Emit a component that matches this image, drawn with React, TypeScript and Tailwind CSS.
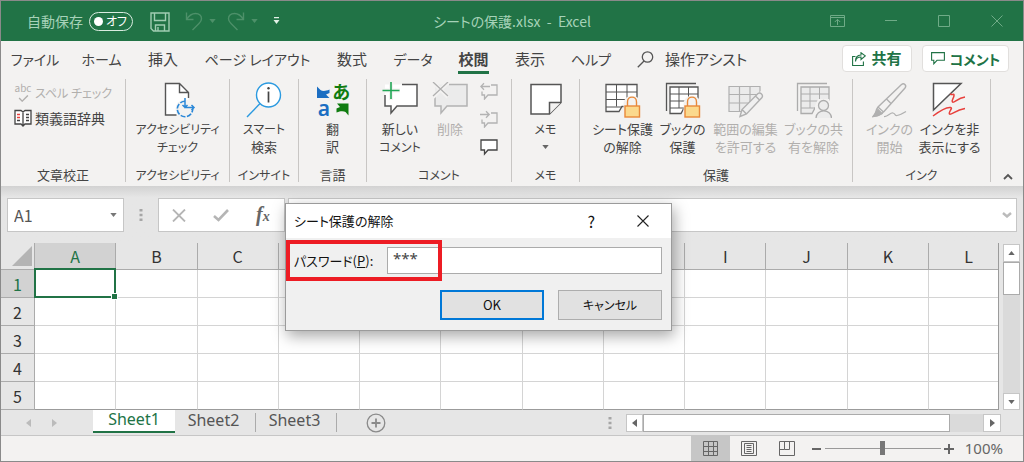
import type { ReactNode } from "react";

const tabs = [
  { label: "ファイル", width: "w-[68px]", size: "text-sm" },
  { label: "ホーム", width: "w-[65px]", size: "text-sm" },
  { label: "挿入", width: "w-[58px]", size: "text-[15px]" },
  { label: "ページ レイアウト", width: "w-[131px]", size: "text-sm" },
  { label: "数式", width: "w-[58px]", size: "text-[15px]" },
  { label: "データ", width: "w-[64px]", size: "text-sm" },
  { label: "校閲", width: "w-[57px]", size: "text-[15px]", active: true },
  { label: "表示", width: "w-[56px]", size: "text-[15px]" },
  { label: "ヘルプ", width: "w-[66px]", size: "text-sm" },
];

const columns = ["A", "B", "C", "D", "E", "F", "G", "H", "I", "J", "K", "L"];
const rows = [1, 2, 3, 4, 5];

function Caret({ className = "" }: { className?: string }) {
  return (
    <svg viewBox="0 0 8 5" className={`h-[4px] w-[7px] ${className}`} fill="currentColor" aria-hidden="true">
      <path d="M0 0h8L4 5z" />
    </svg>
  );
}

function Dots() {
  return (
    <svg viewBox="0 0 4 14" className="h-[14px] w-[4px] shrink-0" fill="#a6a6a6" aria-hidden="true">
      <path d="M.5 1h3v2.500h-3zM.5 5.800h3v2.500h-3zM.5 10.600h3v2.500h-3z" />
    </svg>
  );
}

function TitleBar() {
  return (
    <header className="grid h-[40px] grid-cols-[1fr_auto_1fr] items-center bg-[#217346] text-sm text-[#a6d2b8]">
      <div className="flex items-center pl-[26px]">
        <span>自動保存</span>
        <button
          role="switch"
          aria-checked="false"
          aria-label="自動保存"
          className="ml-[6px] flex h-[19px] w-[44px] items-center justify-between whitespace-nowrap rounded-full border border-[#d9ebe0] pl-[4px] pr-[5px] text-xs leading-none text-white"
        >
          <span className="size-[9px] shrink-0 rounded-full bg-white" />
          オフ
        </button>
        <button aria-label="上書き保存" className="ml-[17px] pt-[2px]">
          <svg viewBox="0 0 20 20" className="size-[20px]" fill="none" stroke="#a0cdb2" strokeWidth="1.400">
            <path d="M1 1h18v18H3.500L1 16.500zM4.500 1v7.500h11V1M5.500 19v-6h9v6M8 15v4" />
          </svg>
        </button>
        <button aria-label="元に戻す" className="ml-[15px] flex items-center gap-[6px] text-[#4d9069]">
          <svg viewBox="0 0 18 20" className="h-[20px] w-[18px]" fill="none" stroke="currentColor" strokeWidth="1.400">
            <path d="M1.500 1.500v7h7M1.500 8.500C4 4.500 7 2.500 10.500 2.500c4 0 6 2.500 6 5.200 0 2-1 3.300-2.500 4.800L7.500 19" />
          </svg>
          <Caret />
        </button>
        <button aria-label="やり直し" className="ml-[11px] flex items-center gap-[6px] text-[#4d9069]">
          <svg viewBox="0 0 18 20" className="h-[20px] w-[18px]" fill="none" stroke="currentColor" strokeWidth="1.400">
            <path d="M16.500 1.500v7h-7M16.500 8.500C14 4.500 11 2.500 7.500 2.500c-4 0-6 2.500-6 5.200 0 2 1 3.300 2.500 4.800l6.500 6.500" />
          </svg>
          <Caret />
        </button>
        <button aria-label="クイック アクセス ツール バーのカスタマイズ" className="ml-[15px] text-[#e3f1e8]">
          <svg viewBox="0 0 7 8" className="h-[8px] w-[7px]" fill="currentColor">
            <path d="M1 0h5v1.200H1zM.5 3h6L3.500 7z" />
          </svg>
        </button>
      </div>
      <h1 className="whitespace-pre">シートの保護.xlsx  -  Excel</h1>
      <div className="flex items-center justify-end pr-[20px] text-[#6fab87]">
        <button aria-label="リボンの表示オプション" className="mr-[40px]">
          <svg viewBox="0 0 15 12" className="h-[12px] w-[15px]" fill="none" stroke="currentColor">
            <path d="M.5.500h14v11H.5zM.5 2.500h14M7.500 10V4.500M4.800 7l2.700-2.700L10.200 7" />
          </svg>
        </button>
        <button aria-label="最小化" className="mr-[41px]">
          <svg viewBox="0 0 12 12" className="size-[12px]" stroke="currentColor"><path d="M0 5.500h12" /></svg>
        </button>
        <button aria-label="最大化" className="mr-[41px]">
          <svg viewBox="0 0 12 12" className="size-[12px]" fill="none" stroke="currentColor"><path d="M.5.500h11v11H.5z" /></svg>
        </button>
        <button aria-label="閉じる">
          <svg viewBox="0 0 12 12" className="size-[12px]" stroke="currentColor"><path d="M.5.500l11 11M11.500.500l-11 11" /></svg>
        </button>
      </div>
    </header>
  );
}

function TabBar() {
  return (
    <nav className="flex h-[38px] items-center text-[15px] text-[#444]">
      {tabs.map((t) => (
        <button key={t.label} className={`${t.width} ${t.size} flex h-full shrink-0 justify-center whitespace-nowrap`}>
          <span
            className={
              t.active
                ? "mt-[5px] h-[28px] border-b-[3px] border-[#217346] font-bold leading-[26px]"
                : "mt-[5px] h-[28px] leading-[26px]"
            }
          >
            {t.label}
          </span>
        </button>
      ))}
      <button className="ml-[13px] flex h-full shrink-0 gap-[11px] whitespace-nowrap pt-[5px] leading-[26px]">
        <svg viewBox="0 0 17 17" className="mt-[5px] size-[17px]" fill="none" stroke="#555" strokeWidth="1.300">
          <circle cx="10.500" cy="6" r="5.200" />
          <path d="M7 10L.8 16.300" />
        </svg>
        操作アシスト
      </button>
      <div className="ml-auto flex gap-[10px] self-start pr-[14px] pt-[4px] font-bold text-[#217346]">
        <button className="flex h-[27px] w-[70px] items-center justify-center gap-[5px] rounded-sm border border-[#e1dfdd] bg-white">
          <svg viewBox="0 0 14 14" className="size-[14px]" fill="none" stroke="currentColor" strokeWidth="1.100">
            <path d="M3.500 4.500H.6v9h10.800V9.500M3.500 9.500c.3-3 2.200-4.500 5.500-4.500V7.500l4.300-3.700L9 .7V3C5 3 3.300 6 3.500 9.500z" />
          </svg>
          共有
        </button>
        <button className="flex h-[27px] w-[87px] items-center justify-center gap-[5px] rounded-sm border border-[#e1dfdd] bg-white text-sm">
          <svg viewBox="0 0 14 13" className="h-[13px] w-[14px]" fill="none" stroke="currentColor" strokeWidth="1.100">
            <path d="M.6.600h12.800v7.700H6l-3.200 3.500V8.300H.6z" />
          </svg>
          コメント
        </button>
      </div>
    </nav>
  );
}

function Group({ label, width, kana, children }: { label: string; width: string; kana?: boolean; children: ReactNode }) {
  return (
    <section aria-label={label} className={`${width} flex h-[103px] shrink-0 flex-col border-r border-[#c8c6c4]`}>
      <div className="flex h-[90px] justify-center pt-[3px]">{children}</div>
      <div className={`text-center leading-[14px] ${kana ? "text-xs leading-[14px]" : ""}`}>{label}</div>
    </section>
  );
}

function BigButton({
  icon,
  lines,
  width,
  disabled,
  menu,
}: {
  icon: ReactNode;
  lines: string[];
  width: string;
  disabled?: boolean;
  menu?: boolean;
}) {
  return (
    <button
      disabled={disabled}
      className={`${width} flex h-[78px] shrink-0 flex-col items-center whitespace-nowrap leading-[18px] ${
        disabled ? "text-[#b1afad]" : "text-[#444]"
      }`}
    >
      <span className="flex h-[38px]">{icon}</span>
      {lines.map((l) => (
        <span key={l} className={/^[ァ-ヶー]+$/.test(l) ? "text-xs leading-[18px]" : ""}>
          {l}
        </span>
      ))}
      {menu && <Caret className="mt-[7px] text-[#666]" />}
    </button>
  );
}

const iconBox = "size-[36px]";

function AccessIcon() {
  return (
    <svg viewBox="0 0 36 36" className={iconBox} fill="none">
      <path d="M5.500 1.500h14l9 9V33h-23z" fill="#fff" />
      <path d="M28.500 16v-5.500l-9-9h-14V33h11M19.500 1.500v9h9" stroke="#555" strokeWidth="1.400" />
      <circle cx="25" cy="27" r="9.500" fill="#f3f2f1" />
      <path d="M25 19.300a7.700 7.700 0 1 0 7.700 7.700" stroke="#2b88d8" strokeWidth="1.600" strokeDasharray="5 1.500" />
      <path d="M25 16v9.500h9M22.500 23l2.500 2.500 2.500-2.500M31.500 23l2.500 2.500-2.500 2.500" stroke="#2b88d8" strokeWidth="1.500" />
    </svg>
  );
}

function SmartIcon() {
  return (
    <svg viewBox="0 0 36 36" className={iconBox} fill="none">
      <circle cx="22.500" cy="13" r="12" fill="#fff" stroke="#2b9ae0" strokeWidth="1.400" />
      <path d="M14 21.500L1 35" stroke="#2b9ae0" strokeWidth="1.400" />
      <path d="M22.500 9.500v11" stroke="#444" strokeWidth="1.700" />
      <circle cx="22.500" cy="6.300" r="1.200" fill="#444" />
    </svg>
  );
}

function TranslateIcon() {
  return (
    <span className="grid h-[36px] w-[34px] grid-cols-2 text-center font-bold leading-[18px]">
      <svg viewBox="0 0 16 18" className="h-[18px] w-[16px]" fill="#1b6ec2">
        <path d="M1 4.500V16h12.500L10 12.500l3.500-1.500V7.500C9 9.500 6 9 4.500 8z" />
      </svg>
      <span className="text-lg leading-[18px] text-[#107c10]">あ</span>
      <span className="font-['Noto_Sans'] text-[21px] font-semibold leading-[16px] text-[#1b6ec2]">a</span>
      <svg viewBox="0 0 16 18" className="h-[18px] w-[16px]" fill="#107c10">
        <path d="M15.500 15.500V3.500H4L7 7l-3.500 1.500v4C8 10.500 11 11 12.500 12z" />
      </svg>
    </span>
  );
}

function NewCommentIcon() {
  return (
    <svg viewBox="0 0 36 36" className={iconBox} fill="none">
      <path d="M3 2.500h32v21.500H15l-6 7v-7H3z" fill="#fff" />
      <path d="M20 2.500h15v21.500H15l-6 7v-7H3V13" stroke="#555" strokeWidth="1.500" />
      <path d="M9 0v18M0 8.500h18" stroke="#f3f2f1" strokeWidth="4" />
      <path d="M9 0v17M.5 8.500h17" stroke="#21a656" strokeWidth="1.600" />
    </svg>
  );
}

function DeleteIcon() {
  return (
    <svg viewBox="0 0 36 36" className={iconBox} fill="none">
      <path d="M3 2.500h32v21.500H15l-6 7v-7H3z" fill="#ebebeb" />
      <path d="M17 2.500h18v21.500H15l-6 7v-7H3V15" stroke="#b3b3b3" strokeWidth="1.500" />
      <path d="M1 0l15 15M16 0L1 15" stroke="#f3f2f1" strokeWidth="4" />
      <path d="M1 0l15 14M16 0L1 14" stroke="#b0b0b0" strokeWidth="1.300" />
    </svg>
  );
}

function SmallComment({ kind }: { kind: "prev" | "next" | "show" }) {
  if (kind === "show")
    return (
      <svg viewBox="0 0 18 18" className="size-[18px]" fill="none">
        <path d="M1 2h16v10H8l-3.500 4v-4H1z" fill="#fff" stroke="#444" strokeWidth="1.300" />
      </svg>
    );
  return (
    <svg viewBox="0 0 18 18" className="size-[18px]" fill="none" stroke="#b3b3b3" strokeWidth="1.300">
      <path d="M11 3h6v10H8l-3.500 4v-4H2V9.500" />
      {kind === "prev" ? <path d="M10 4.500H.8M4 1.300L.8 4.500 4 7.700" /> : <path d="M0 4.500h9.200M6 1.300l3.200 3.200L6 7.700" />}
    </svg>
  );
}

function MemoIcon() {
  return (
    <svg viewBox="0 0 36 36" className={iconBox} fill="none" stroke="#555" strokeWidth="1.500">
      <path d="M3 2.500h30v18L21.500 32H3z" fill="#fff" />
      <path d="M33 20.500H21.500V32" fill="#f3f2f1" />
    </svg>
  );
}

function Lock() {
  return (
    <g>
      <path d="M18.500 36V22c0-11 17-11 17 0v14z" fill="#f3f2f1" />
      <path d="M22.500 24v-4c0-6.500 9-6.500 9 0v4" stroke="#e8893a" strokeWidth="1.400" fill="none" />
      <rect x="20" y="24" width="14.500" height="11" fill="#fbd98d" stroke="#e8893a" strokeWidth="1.400" />
    </g>
  );
}

function SheetLockIcon() {
  return (
    <svg viewBox="0 0 36 36" className={iconBox} fill="none" stroke="#555" strokeWidth="1.300">
      <path d="M1 2.500h31v22H17l-3 5H1z" fill="#fff" />
      <path d="M1 10h31M1 17.500h31M11.500 2.500v22M22 2.500v22M1 25h16" strokeWidth="1" />
      <g stroke="none"><Lock /></g>
    </svg>
  );
}

function BookLockIcon() {
  return (
    <svg viewBox="0 0 36 36" className={iconBox} fill="none" stroke="#555" strokeWidth="1.300">
      <path d="M1.500 29V1.500H31" />
      <path d="M5 5h28v21H19l-3 5.500H5z" fill="#fff" />
      <path d="M5 12h28M5 19h28M14 5v21M23.500 5v21M5 26h14" strokeWidth="1" />
      <g stroke="none"><Lock /></g>
    </svg>
  );
}

function RangeEditIcon() {
  return (
    <svg viewBox="0 0 36 36" className={iconBox} fill="none" stroke="#b0b0b0" strokeWidth="1.200">
      <path d="M1 4.500h31v25H1z" fill="#ebebeb" />
      <path d="M1 12.500h31M1 21h31M11.500 4.500v25M22 4.500v25" />
      <path d="M9 36L36 8v28z" fill="#f3f2f1" stroke="#f3f2f1" strokeWidth="3" />
      <path d="M12 34.500l2-7L30 11.500c2.500-1.500 5.500 1.500 4 4L18.500 32z M14 27.500l4.500 4.500M27.500 14l4.500 4.500" fill="#f0f0f0" strokeWidth="1.400" />
    </svg>
  );
}

function BookShareIcon() {
  return (
    <svg viewBox="0 0 36 36" className={iconBox} fill="none" stroke="#acacac" strokeWidth="1.300">
      <path d="M1.500 29V1.500H31" />
      <path d="M5 5h28v21H19l-3 5.500H5z" fill="#ebebeb" />
      <path d="M5 12h28M5 19h28M14 5v21M23.500 5v21M5 26h14" strokeWidth="1" />
      <path d="M19 36V24l3-7h11l3 7v12z" fill="#f3f2f1" stroke="none" />
      <circle cx="27.500" cy="23.500" r="5" fill="#ececec" />
      <path d="M20 36c0-9.500 15.500-9.500 15.500 0" fill="#ececec" />
    </svg>
  );
}

function PenIcon() {
  return (
    <svg viewBox="0 0 36 36" className={iconBox} fill="none" stroke="#b0b0b0" strokeWidth="1.400">
      <path d="M2 34c2-2 1-5 4-9L29.500 2.500c2.500-2 5.500 1 3.500 3.500L12 29.500c-3 3-7 4.500-10 4.500zM14.500 17l5 5M6 25l5.500 5" />
      <path d="M1 34.500l5-1 4-2-4-4z" fill="#b0b0b0" />
      <path d="M12 34.500c4 .5 6-4 9-3.500s1 3 4 2.500 5-1.500 9-4" strokeWidth="1.200" />
    </svg>
  );
}

function HideInkIcon() {
  return (
    <svg viewBox="0 0 36 36" className={iconBox} fill="none" strokeWidth="1.500">
      <path d="M1.500 1.500h27.500L1.500 28z" fill="#fff" stroke="#555" />
      <path d="M18 12c3 1.500 4-1 4 1.500s-3 5-1.500 6.500 5-4 12.500-5" stroke="#e8403c" />
      <path d="M1 34c6-4.500 14-9 17.500-8.500 3 .5-2.500 4.500-1 6.500 1.500 1.500 6-4 15.500-5.500" stroke="#e8403c" />
    </svg>
  );
}

function Ribbon() {
  return (
    <div className="flex h-[107px] text-[13px] text-[#444]">
      <Group label="文章校正" width="w-[125px]">
        <div className="flex w-full flex-col gap-[4px] pl-[13px]">
          <button disabled className="flex h-[21px] items-center gap-[3px] whitespace-nowrap text-xs text-[#b1afad]">
            <span className="flex w-[18px] flex-col items-center">
              <span className="text-[10px] leading-[8px]">abc</span>
              <svg viewBox="0 0 12 8" className="mt-[3px] h-[7px] w-[11px]" fill="none" stroke="currentColor" strokeWidth="1.600">
                <path d="M1 3.500L4.500 7 11 .5" />
              </svg>
            </span>
            スペル チェック
          </button>
          <button className="flex h-[22px] items-center gap-[3px] whitespace-nowrap text-sm">
            <svg viewBox="0 0 18 18" className="size-[18px]" fill="#fff" stroke="#444" strokeWidth="1.300">
              <path d="M1 1.500h6L9 3l2-1.500h6V15h-6l-2 2-2-2H1zM9 3v14" />
              <path d="M3 11.500h3M12 5.500h3M12 8.500h3M12 11.500h3" />
              <path d="M3 5.500h3M3 8.500h3" stroke="#e8403c" />
            </svg>
            類義語辞典
          </button>
        </div>
      </Group>
      <Group label="アクセシビリティ" kana width="w-[104px]">
        <BigButton width="w-[96px]" icon={<AccessIcon />} lines={["アクセシビリティ", "チェック"]} />
      </Group>
      <Group label="インサイト" kana width="w-[69px]">
        <BigButton width="w-[60px]" icon={<SmartIcon />} lines={["スマート", "検索"]} />
      </Group>
      <Group label="言語" width="w-[68px]">
        <BigButton width="w-[60px]" icon={<TranslateIcon />} lines={["翻", "訳"]} />
      </Group>
      <Group label="コメント" kana width="w-[145px]">
        <BigButton width="w-[56px]" icon={<NewCommentIcon />} lines={["新しい", "コメント"]} />
        <BigButton width="w-[44px]" disabled icon={<DeleteIcon />} lines={["削除"]} />
        <div className="flex w-[34px] flex-col items-center gap-[10px]">
          <button disabled aria-label="前のコメント"><SmallComment kind="prev" /></button>
          <button disabled aria-label="次のコメント"><SmallComment kind="next" /></button>
          <button aria-label="コメントの表示"><SmallComment kind="show" /></button>
        </div>
      </Group>
      <Group label="メモ" kana width="w-[68px]">
        <BigButton width="w-[60px]" icon={<MemoIcon />} lines={["メモ"]} menu />
      </Group>
      <Group label="保護" width="w-[273px]">
        <div className="flex pl-[7px]">
          <BigButton width="w-[62px]" icon={<SheetLockIcon />} lines={["シート保護", "の解除"]} />
          <BigButton width="w-[58px]" icon={<BookLockIcon />} lines={["ブックの", "保護"]} />
          <BigButton width="w-[68px]" disabled icon={<RangeEditIcon />} lines={["範囲の編集", "を許可する"]} />
          <BigButton width="w-[68px]" disabled icon={<BookShareIcon />} lines={["ブックの共", "有を解除"]} />
        </div>
      </Group>
      <Group label="インク" kana width="w-[138px]">
        <BigButton width="w-[56px]" disabled icon={<PenIcon />} lines={["インクの", "開始"]} />
        <BigButton width="w-[64px]" icon={<HideInkIcon />} lines={["インクを非", "表示にする"]} />
      </Group>
      <button aria-label="リボンを折りたたむ" className="ml-auto mr-[10px] self-end pb-[6px]">
        <svg viewBox="0 0 10 7" className="h-[7px] w-[10px]" fill="none" stroke="#555" strokeWidth="1.800">
          <path d="M1 6l4-4 4 4" />
        </svg>
      </button>
    </div>
  );
}

function FormulaBar() {
  return (
    <div className="flex h-[57px] items-start bg-linear-to-b from-[#d2d2d2] to-[#e6e6e6] to-20% pl-[6px] pr-[6px] pt-[12px]">
      <div className="flex h-[34px] w-[117px] shrink-0 items-center border border-[#c6c6c6] bg-white pl-[6px] pr-[6px] text-[#555]">
        <input aria-label="名前ボックス" defaultValue="A1" className="w-full min-w-0 bg-transparent text-base outline-none" />
        <button aria-label="名前の一覧" className="text-[#777]"><Caret /></button>
      </div>
      <div className="flex h-[34px] w-[34px] shrink-0 items-center justify-center"><Dots /></div>
      <div className="flex h-[34px] w-[127px] shrink-0 items-center border border-[#c6c6c6] bg-white pl-[13px]">
        <button disabled aria-label="キャンセル">
          <svg viewBox="0 0 14 13" className="h-[13px] w-[14px]" stroke="#b5b5b5" strokeWidth="1.800"><path d="M1 .5l12 12M13 .5l-12 12" /></svg>
        </button>
        <button disabled aria-label="入力" className="ml-[27px]">
          <svg viewBox="0 0 16 13" className="h-[13px] w-[16px]" fill="none" stroke="#b5b5b5" strokeWidth="2.600"><path d="M1 7l4.500 4L15 1" /></svg>
        </button>
        <button aria-label="関数の挿入" className="ml-[27px] font-['Liberation_Serif'] text-xl font-bold italic leading-none text-[#666]">
          f<span className="text-sm">x</span>
        </button>
      </div>
      <div className="ml-[3px] flex h-[34px] min-w-0 flex-1 items-center border border-[#c6c6c6] bg-white pr-[4px]">
        <input aria-label="数式バー" className="min-w-0 flex-1 bg-transparent outline-none" />
        <button aria-label="数式バーの展開">
          <svg viewBox="0 0 10 6" className="h-[6px] w-[10px]" fill="none" stroke="#bbb" strokeWidth="2.400"><path d="M1 1l4 3.500L9 1" /></svg>
        </button>
      </div>
    </div>
  );
}

function Grid() {
  return (
    <div className="flex bg-[#e6e6e6]">
      <div className="min-w-0 flex-1 border-r border-[#9b9b9b]">
        <table className="w-full table-fixed border-separate border-spacing-0 text-base text-[#333]">
          <colgroup>
            <col className="w-[34px]" />
            {columns.map((c) => (
              <col key={c} className={c === "L" ? "w-[69px]" : ""} />
            ))}
          </colgroup>
          <thead>
            <tr className="h-[27px]">
              <th aria-label="すべて選択" className="border-b border-r border-[#ababab] p-0 pl-[11px] align-middle">
                <svg viewBox="0 0 20 20" className="size-[20px]" fill="#b4b4b4"><path d="M20 0v20H0z" /></svg>
              </th>
              {columns.map((c) => (
                <th
                  key={c}
                  scope="col"
                  className={`border-b border-[#ababab] p-0 text-center font-normal leading-[26px] ${
                    c === "A" ? "border-r bg-[#d2d2d2] text-[#217346]" : c === "L" ? "pl-[10px]" : "border-r"
                  }`}
                >
                  {c}
                </th>
              ))}
            </tr>
          </thead>
          <tbody>
            {rows.map((r) => (
              <tr key={r} className="h-[28px]">
                <th
                  scope="row"
                  className={`border-b border-r border-[#ababab] p-0 text-center font-normal leading-[26px] ${
                    r === 1 ? "bg-[#d2d2d2] text-[#217346]" : ""
                  }`}
                >
                  {r}
                </th>
                {columns.map((c) => (
                  <td
                    key={c}
                    className={`relative border-b bg-white p-0 ${r === 5 ? "border-b-[#9b9b9b]" : "border-b-[#d4d4d4]"} ${
                      c === "L" ? "" : "border-r border-r-[#d4d4d4]"
                    }`}
                  >
                    {r === 1 && c === "A" && (
                      <div className="absolute -inset-x-[1px] -bottom-[1px] -top-[2px] z-10 border-2 border-[#217346]">
                        <span className="absolute -bottom-[3px] -right-[3px] size-[5px] bg-[#217346] outline outline-white" />
                      </div>
                    )}
                  </td>
                ))}
              </tr>
            ))}
          </tbody>
        </table>
      </div>
      <div className="flex w-[24px] shrink-0 flex-col items-center pt-[1px]">
        <div className="flex w-[17px] flex-1 flex-col bg-[#dadada]">
          <button aria-label="上へスクロール" className="flex h-[18px] items-center justify-center border border-[#c6c6c6] bg-white text-[#666]">
            <Caret className="rotate-180" />
          </button>
          <div className="h-[33px] border border-[#ababab] bg-white" />
          <button aria-label="下へスクロール" className="mt-auto flex h-[17px] items-center justify-center border border-[#c6c6c6] bg-white text-[#666]">
            <Caret />
          </button>
        </div>
      </div>
    </div>
  );
}

function Triangle({ dir, className = "" }: { dir: "left" | "right"; className?: string }) {
  return (
    <svg viewBox="0 0 5 8" className={`h-[8px] w-[5px] ${className}`} fill="currentColor" aria-hidden="true">
      {dir === "left" ? <path d="M5 0v8L0 4z" /> : <path d="M0 0v8l5-4z" />}
    </svg>
  );
}

function SheetBar() {
  const other = "my-[3px] h-[19px] w-[81px] border-r border-[#ababab] pb-[5px] pr-[3px] leading-[14px] text-[#555]";
  return (
    <div className="flex h-[26px] border-b border-[#c6c6c6] bg-[#e6e6e6] font-['Noto_Sans'] text-base">
      <div className="flex w-[92px] shrink-0 items-center pl-[25px] text-[#bbb]">
        <button aria-label="前のシート"><Triangle dir="left" /></button>
        <button aria-label="次のシート" className="ml-[21px]"><Triangle dir="right" /></button>
      </div>
      <button className="h-[23px] w-[82px] border-b-2 border-[#217346] bg-white pb-[3px] leading-[18px] text-[#217346]">Sheet1</button>
      <button className={other}>Sheet2</button>
      <button className={other}>Sheet3</button>
      <button aria-label="新しいシート" className="ml-[29px]">
        <svg viewBox="0 0 20 20" className="size-[20px]" fill="none" stroke="#8a8a8a" strokeWidth="1.300">
          <circle cx="10" cy="10" r="8.800" />
          <path d="M10 5.500v9M5.500 10h9" strokeWidth="1.800" />
        </svg>
      </button>
      <div className="ml-auto flex items-center pr-[22px]">
        <Dots />
        <div className="ml-[14px] flex h-[18px] w-[375px] bg-[#dadada]">
          <button aria-label="左へスクロール" className="flex w-[17px] items-center justify-center border border-[#c6c6c6] bg-white text-[#666]">
            <Triangle dir="left" />
          </button>
          <div className="w-[307px] border border-[#ababab] bg-white" />
          <button aria-label="右へスクロール" className="ml-auto flex w-[18px] items-center justify-center border border-[#c6c6c6] bg-white text-[#666]">
            <Triangle dir="right" />
          </button>
        </div>
      </div>
    </div>
  );
}

function StatusBar() {
  return (
    <footer className="flex h-[25px] items-center justify-end bg-[#f3f2f1] pr-[20px] text-[#666]">
      <button aria-label="標準" className="flex h-full w-[39px] items-center justify-center bg-[#c6c6c6]">
        <svg viewBox="0 0 15 15" className="size-[15px]" fill="none" stroke="#666"><path d="M.5.500h14v14H.5zM.5 5.500h14M.5 10.500h14M5.500.500v14M10.500.500v14" /></svg>
      </button>
      <button aria-label="ページ レイアウト" className="flex h-full w-[38px] items-center justify-center">
        <svg viewBox="0 0 16 15" className="h-[15px] w-[16px]" fill="none" stroke="#666"><path d="M.5.500h15v14H.5zM3.500 2.500h9v10h-9zM5.500 4.500h5M5.500 6.500h5M5.500 8.500h5M5.500 10.500h5" /></svg>
      </button>
      <button aria-label="改ページ プレビュー" className="flex h-full w-[39px] items-center justify-center">
        <svg viewBox="0 0 16 15" className="h-[15px] w-[16px]" fill="none" stroke="#666"><path d="M.5.500h15v14H.5zM5.500.500v8h5v-8M.5 8.500h5" /></svg>
      </button>
      <button aria-label="縮小" className="ml-[5px]">
        <svg viewBox="0 0 10 10" className="size-[10px]" stroke="#666" strokeWidth="2"><path d="M0 5h9" /></svg>
      </button>
      <input
        type="range"
        aria-label="ズーム"
        defaultValue={50}
        className="ml-[3px] h-[15px] w-[116px] appearance-none bg-transparent [&::-webkit-slider-runnable-track]:h-px [&::-webkit-slider-runnable-track]:bg-[#999] [&::-webkit-slider-thumb]:-mt-[7px] [&::-webkit-slider-thumb]:h-[14px] [&::-webkit-slider-thumb]:w-[5px] [&::-webkit-slider-thumb]:appearance-none [&::-webkit-slider-thumb]:bg-[#777]"
      />
      <button aria-label="拡大" className="ml-[3px]">
        <svg viewBox="0 0 10 10" className="size-[10px]" stroke="#666" strokeWidth="2"><path d="M0 5h10M5 0v10" /></svg>
      </button>
      <span className="ml-[11px] font-['Noto_Sans'] text-[15px]">100%</span>
    </footer>
  );
}

function PasswordDialog() {
  return (
    <div
      role="dialog"
      aria-labelledby="dialog-title"
      className="absolute left-[284px] top-[202px] z-20 w-[387px] border border-[#9b9b9b] bg-[#f0f0f0] text-[13px] text-[#111] shadow-[2px_5px_14px_rgba(0,0,0,0.35)]"
    >
      <div className="flex h-[34px] items-center bg-white pl-[8px] pr-[22px]">
        <h2 id="dialog-title">シート保護の解除</h2>
        <button aria-label="ヘルプ" className="ml-auto text-base">?</button>
        <button aria-label="閉じる" className="ml-[42px]">
          <svg viewBox="0 0 12 12" className="size-[12px]" stroke="#222" strokeWidth="1.100"><path d="M.5.500l11 11M11.500.500l-11 11" /></svg>
        </button>
      </div>
      <div className="flex items-center pl-[8px] pr-[9px] pt-[9px]">
        <label htmlFor="password" className="w-[93px] whitespace-nowrap">
          パスワード(<span className="underline">P</span>):
        </label>
        <input
          id="password"
          defaultValue="***"
          className="h-[27px] min-w-0 flex-1 border border-[#ababab] bg-white pb-[6px] pl-[5px] font-['Noto_Sans'] text-[15px] text-[#444] outline-none"
        />
      </div>
      <div className="flex justify-end gap-[14px] pb-[10px] pr-[9px] pt-[16px]">
        <button className="h-[30px] w-[104px] border-2 border-[#0078d7] bg-[#e1e1e1]">OK</button>
        <button className="h-[30px] w-[104px] border border-[#adadad] bg-[#e1e1e1] text-xs">キャンセル</button>
      </div>
      <div className="pointer-events-none absolute left-0 top-[36px] h-[41px] w-[156px] border-4 border-[#ed1c24]" />
    </div>
  );
}

export default function App() {
  return (
    <div className="relative overflow-hidden border border-[#8a8a8a] bg-[#f3f2f1] font-['Noto_Sans_CJK_JP',sans-serif] [font-feature-settings:'palt']">
      <TitleBar />
      <TabBar />
      <Ribbon />
      <FormulaBar />
      <Grid />
      <SheetBar />
      <StatusBar />
      <PasswordDialog />
    </div>
  );
}
